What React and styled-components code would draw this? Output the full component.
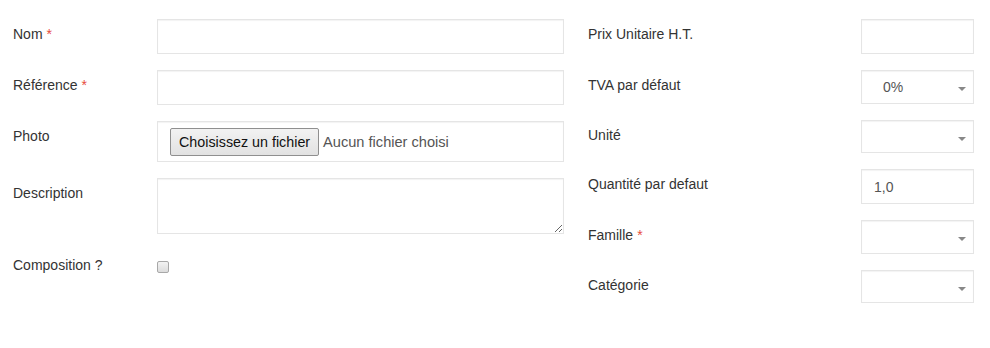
import React from 'react'
import styled, { createGlobalStyle } from 'styled-components'

const Global = createGlobalStyle`
  body {
    margin: 0;
    background: #fff;
    font-family: "Liberation Sans", Arial, sans-serif;
    font-size: 14px;
    color: #333;
  }
`

const Form = styled.div`
  display: grid;
  grid-template-columns: 551px 386px;
  column-gap: 24px;
  padding: 19px 0 0 13px;
`

const Column = styled.div`
  display: flex;
  flex-direction: column;
  gap: ${p => p.gap}px;
`

const Row = styled.div`
  display: grid;
  grid-template-columns: ${p => p.labelWidth}px 1fr;
  align-items: start;
`

const Label = styled.label`
  padding-top: 5px;
  line-height: 20px;
  color: #333;
`

const Star = styled.span`
  color: #e74c3c;
  margin-left: 4px;
`

const Field = styled.div`
  box-sizing: border-box;
  height: ${p => p.h}px;
  border: 1px solid #e5e5e5;
  box-shadow: inset 0 1px 1px rgba(0, 0, 0, 0.05);
  background: #fff;
  display: flex;
  align-items: center;
  padding-left: ${p => p.pl || 12}px;
  position: relative;
  color: #555;
  line-height: 20px;
`

const Area = styled.textarea`
  box-sizing: border-box;
  display: block;
  width: 100%;
  height: 56px;
  margin: 0;
  border: 1px solid #e5e5e5;
  box-shadow: inset 0 1px 1px rgba(0, 0, 0, 0.05);
  font-family: inherit;
  outline: none;
`

const FileButton = styled.span`
  box-sizing: border-box;
  height: 28px;
  padding: 0 8px;
  display: inline-flex;
  align-items: center;
  border: 1px solid #8f8f8f;
  border-radius: 2px;
  background: linear-gradient(#f2f2f2, #e2e2e2);
  color: #111;
  font-size: 14.3px;
`

const FileName = styled.span`
  margin-left: 4px;
  color: #555;
  font-size: 14.6px;
`

const Arrow = styled.span`
  position: absolute;
  right: 7px;
  top: 50%;
  border-left: 4px solid transparent;
  border-right: 4px solid transparent;
  border-top: 4px solid #888;
`

const Check = styled.span`
  display: block;
  box-sizing: border-box;
  width: 12px;
  height: 12px;
  margin-top: 11px;
  border: 1px solid #a8a8a8;
  border-radius: 2px;
  background: linear-gradient(#f3f3f3, #dcdcdc);
`

const Req = ({ children }) => (
  <Label>
    {children}
    <Star>*</Star>
  </Label>
)

const Select = ({ value, h }) => (
  <Field h={h} pl={21}>
    {value}
    <Arrow />
  </Field>
)

export default function App() {
  return (
    <>
      <Global />
      <Form>
        <Column gap={16}>
          <Row labelWidth={144}>
            <Req>Nom</Req>
            <Field h={35} />
          </Row>
          <Row labelWidth={144}>
            <Req>Référence</Req>
            <Field h={35} />
          </Row>
          <Row labelWidth={144}>
            <Label>Photo</Label>
            <Field h={41}>
              <FileButton>Choisissez un fichier</FileButton>
              <FileName>Aucun fichier choisi</FileName>
            </Field>
          </Row>
          <Row labelWidth={144}>
            <Label>Description</Label>
            <Area />
          </Row>
          <Row labelWidth={144}>
            <Label>Composition ?</Label>
            <Check />
          </Row>
        </Column>
        <Column gap={16}>
          <Row labelWidth={273}>
            <Label>Prix Unitaire H.T.</Label>
            <Field h={35} />
          </Row>
          <Row labelWidth={273}>
            <Label>TVA par défaut</Label>
            <Select h={34} value="0%" />
          </Row>
          <Row labelWidth={273}>
            <Label>Unité</Label>
            <Select h={33} />
          </Row>
          <Row labelWidth={273}>
            <Label>Quantité par defaut</Label>
            <Field h={35}>1,0</Field>
          </Row>
          <Row labelWidth={273}>
            <Req>Famille</Req>
            <Select h={34} />
          </Row>
          <Row labelWidth={273}>
            <Label>Catégorie</Label>
            <Select h={33} />
          </Row>
        </Column>
      </Form>
    </>
  )
}
